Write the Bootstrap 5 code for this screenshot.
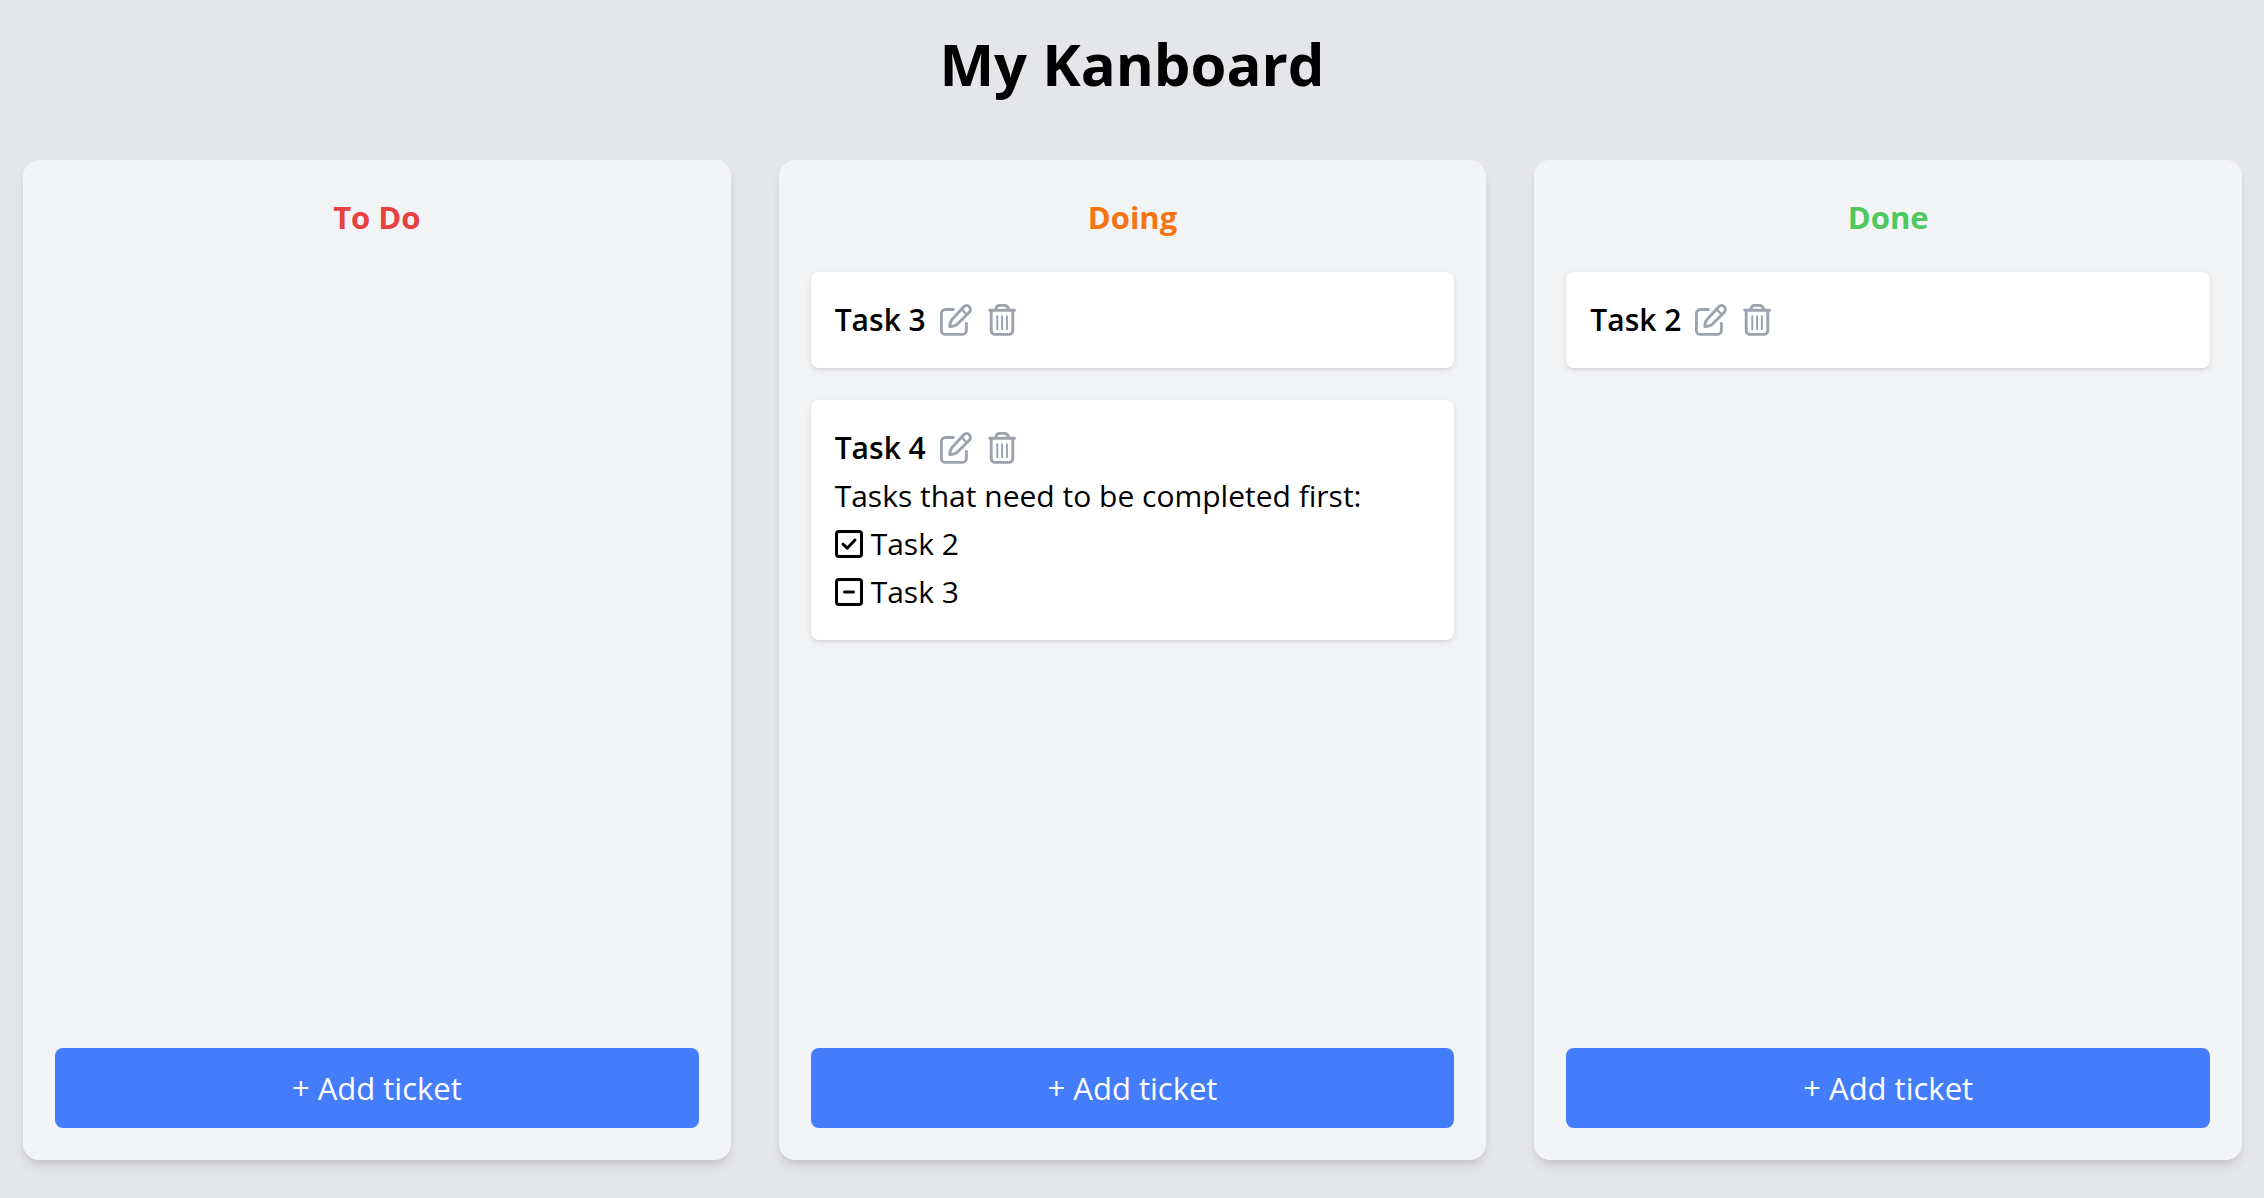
<!DOCTYPE html>
<html lang="en">
<head>
<meta charset="utf-8">
<meta name="viewport" content="width=device-width, initial-scale=1">
<title>My Kanboard</title>
<link href="https://cdn.jsdelivr.net/npm/bootstrap@5.3.0/dist/css/bootstrap.min.css" rel="stylesheet">
<style>
  body { background: #e5e6ea; color: #000; font-family: "Open Sans", "Noto Sans", sans-serif; font-size: 30px; line-height: 48px; }
  .board-title { font-size: 58px; line-height: 64px; padding: 32px 0 64px; }
  .board { gap: 48px; padding: 0 22px 38px 23px; }
  .board-column { flex: 1 1 0; min-width: 0; padding: 32px; background: #f3f4f6; border-radius: 16px;
    box-shadow: 0 8px 12px -2px rgba(0,0,0,.1), 0 4px 8px -4px rgba(0,0,0,.1); }
  .column-name { font-size: 31px; line-height: 50px; margin-bottom: 30px; }
  .name-todo { color: #e84141; }
  .name-doing { color: #f47512; }
  .name-done { color: #4fc860; }
  .ticket-list { gap: 32px; }
  .ticket { padding: 24px; background: #fff; border-radius: 8px; box-shadow: 0 2px 6px rgba(0,0,0,.1), 0 2px 4px -2px rgba(0,0,0,.1); }
  .ticket-name { font-size: 30px; line-height: 48px; min-width: 92px; }
  .ticket-actions { gap: 14px; margin-left: 13px; }
  .icon-button { color: #9ca3af; line-height: 0; }
  .icon-button svg { width: 32px; height: 32px; }
  .ticket .form-check-input { width: 28px; height: 28px; margin: 0; border: 3px solid #000; border-radius: 4px; background-color: #fff; background-size: 22px 22px; }
  .ticket .form-check-input:checked { background-image: url("data:image/svg+xml,%3Csvg xmlns='http://www.w3.org/2000/svg' viewBox='0 0 22 22'%3E%3Cpath d='M5 11.2l4.200 4L17 7' fill='none' stroke='%23000' stroke-width='3' stroke-linecap='round' stroke-linejoin='round'/%3E%3C/svg%3E"); }
  .ticket .form-check-input[type="checkbox"]:indeterminate { border-color: #000; background-color: #fff; background-image: url("data:image/svg+xml,%3Csvg xmlns='http://www.w3.org/2000/svg' viewBox='0 0 22 22'%3E%3Cpath d='M6.500 11h9' stroke='%23000' stroke-width='3' stroke-linecap='round'/%3E%3C/svg%3E"); }
  .add-ticket { --bs-btn-color: #fff; --bs-btn-bg: #437dfc; --bs-btn-hover-color: #fff; --bs-btn-hover-bg: #326bea;
    padding: 16px; border: 0; border-radius: 8px; font-size: 31px; line-height: 48px; }
  @media (max-width: 1200px) { .board { flex-direction: column; } }
</style>
</head>
<body class="min-vh-100 d-flex flex-column">
<svg class="d-none" aria-hidden="true">
  <symbol id="icon-edit" viewBox="0 0 32 32">
    <g fill="none" stroke="currentColor" stroke-width="2.9" stroke-linecap="round" stroke-linejoin="round">
      <path d="M13.3 5.5H5.4a4 4 0 0 0-4 4V26.4a4 4 0 0 0 4 4H22.4a4 4 0 0 0 4-4V19.5"/>
      <path d="M23.8 2.7a3.85 3.85 0 0 1 5.5 5.5L17.5 20c-1.8 1.7-4.6 2.4-7.7 2.6.1-3 .9-5.8 2.6-7.6z"/>
      <path d="M21.6 5.4l5 5" stroke-width="2.3"/>
    </g>
  </symbol>
  <symbol id="icon-trash" viewBox="0 0 32 32">
    <g fill="none" stroke="currentColor" stroke-width="2.9" stroke-linecap="round" stroke-linejoin="round">
      <path d="M3.7 6.2H28.5M5.2 6.5V26.6a3.8 3.8 0 0 0 3.8 3.8H23a3.8 3.8 0 0 0 3.8-3.8V6.5M9.6 5.5c.6-2.7 2-4.1 4.2-4.1h4.6c2.2 0 3.6 1.4 4.2 4.1"/>
      <path d="M11.3 12.2v13M16.1 12.2v13M20.9 12.2v13" stroke-width="2"/>
    </g>
  </symbol>
</svg>

<h1 class="board-title fw-bold text-center m-0">My Kanboard</h1>

<main class="board d-flex flex-grow-1">
  <section class="board-column d-flex flex-column">
    <h2 class="column-name name-todo fw-bold text-center">To Do</h2>
    <button type="button" class="btn add-ticket w-100 mt-auto">+ Add ticket</button>
  </section>

  <section class="board-column d-flex flex-column">
    <h2 class="column-name name-doing fw-bold text-center">Doing</h2>
    <div class="ticket-list d-flex flex-column">
      <article class="ticket">
        <div class="d-flex align-items-center">
          <h3 class="ticket-name fw-semibold m-0">Task 3</h3>
          <div class="ticket-actions d-flex">
            <button type="button" class="icon-button bg-transparent border-0 p-0" aria-label="Edit"><svg><use href="#icon-edit"/></svg></button>
            <button type="button" class="icon-button bg-transparent border-0 p-0" aria-label="Delete"><svg><use href="#icon-trash"/></svg></button>
          </div>
        </div>
      </article>
      <article class="ticket">
        <div class="d-flex align-items-center">
          <h3 class="ticket-name fw-semibold m-0">Task 4</h3>
          <div class="ticket-actions d-flex">
            <button type="button" class="icon-button bg-transparent border-0 p-0" aria-label="Edit"><svg><use href="#icon-edit"/></svg></button>
            <button type="button" class="icon-button bg-transparent border-0 p-0" aria-label="Delete"><svg><use href="#icon-trash"/></svg></button>
          </div>
        </div>
        <p class="m-0">Tasks that need to be completed first:</p>
        <div class="d-flex align-items-center gap-2">
          <input class="form-check-input" type="checkbox" id="dep-task2" checked>
          <label for="dep-task2">Task 2</label>
        </div>
        <div class="d-flex align-items-center gap-2">
          <input class="form-check-input" type="checkbox" id="dep-task3" data-state="in-progress">
          <label for="dep-task3">Task 3</label>
        </div>
      </article>
    </div>
    <button type="button" class="btn add-ticket w-100 mt-auto">+ Add ticket</button>
  </section>

  <section class="board-column d-flex flex-column">
    <h2 class="column-name name-done fw-bold text-center">Done</h2>
    <div class="ticket-list d-flex flex-column">
      <article class="ticket">
        <div class="d-flex align-items-center">
          <h3 class="ticket-name fw-semibold m-0">Task 2</h3>
          <div class="ticket-actions d-flex">
            <button type="button" class="icon-button bg-transparent border-0 p-0" aria-label="Edit"><svg><use href="#icon-edit"/></svg></button>
            <button type="button" class="icon-button bg-transparent border-0 p-0" aria-label="Delete"><svg><use href="#icon-trash"/></svg></button>
          </div>
        </div>
      </article>
    </div>
    <button type="button" class="btn add-ticket w-100 mt-auto">+ Add ticket</button>
  </section>
</main>

<script src="https://cdn.jsdelivr.net/npm/bootstrap@5.3.0/dist/js/bootstrap.bundle.min.js"></script>
<script>
  // Dependencies still in progress are shown with a dash.
  document.querySelectorAll('[data-state="in-progress"]').forEach(function (box) { box.indeterminate = true; });
</script>
</body>
</html>
